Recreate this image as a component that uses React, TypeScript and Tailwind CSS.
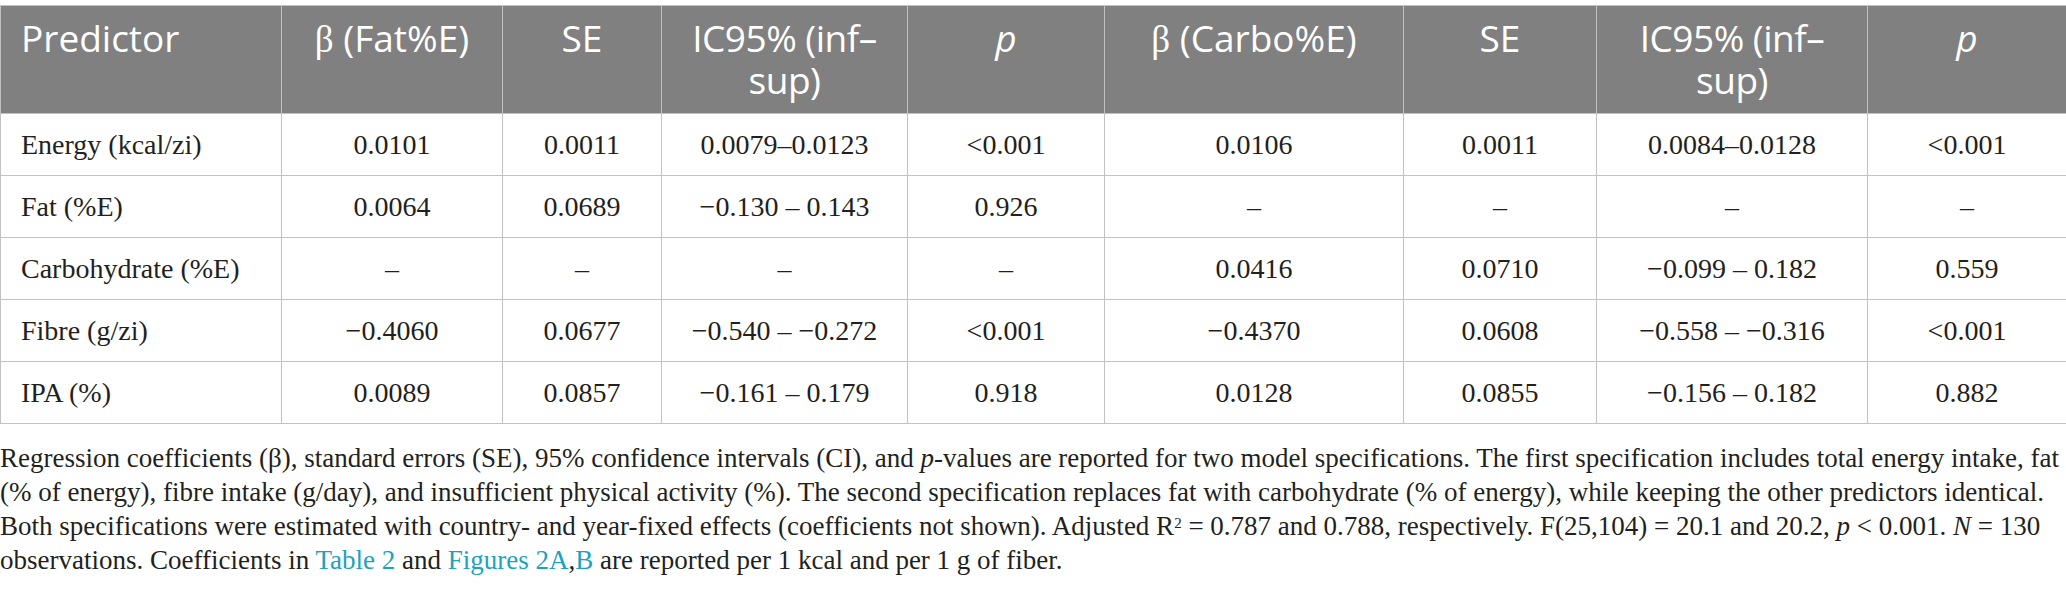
import React from 'react';

type Row = {
  label: string;
  cells: string[];
};

const COL_WIDTHS = ['w-[281px]', 'w-[221px]', 'w-[159px]', 'w-[246px]', 'w-[197px]', 'w-[299px]', 'w-[193px]', 'w-[271px]', 'w-[199px]'];

const ROWS: Row[] = [
  { label: 'Energy (kcal/zi)', cells: ['0.0101', '0.0011', '0.0079–0.0123', '<0.001', '0.0106', '0.0011', '0.0084–0.0128', '<0.001'] },
  { label: 'Fat (%E)', cells: ['0.0064', '0.0689', '−0.130 – 0.143', '0.926', '–', '–', '–', '–'] },
  { label: 'Carbohydrate (%E)', cells: ['–', '–', '–', '–', '0.0416', '0.0710', '−0.099 – 0.182', '0.559'] },
  { label: 'Fibre (g/zi)', cells: ['−0.4060', '0.0677', '−0.540 – −0.272', '<0.001', '−0.4370', '0.0608', '−0.558 – −0.316', '<0.001'] },
  { label: 'IPA (%)', cells: ['0.0089', '0.0857', '−0.161 – 0.179', '0.918', '0.0128', '0.0855', '−0.156 – 0.182', '0.882'] },
];

const headCell = 'border border-[#c2c2c2] px-5 pt-[11px] pb-[12px] align-top font-normal leading-[42px]';
const bodyCell = 'border border-[#c2c2c2] px-5 h-[62px] align-middle leading-[36px]';

const Link = ({ children }: { children: React.ReactNode }) => (
  <span className="text-[#1ba3bd]">{children}</span>
);

// serif beta, like the reference header
const Beta = () => <span className="font-['Liberation_Serif',serif]">β</span>;

export default function App() {
  return (
    <div className="w-[2066px] overflow-hidden bg-white pt-[5px] text-[#231f20]">
      <table className="w-[2066px] table-fixed border-collapse">
        <colgroup>
          {COL_WIDTHS.map((w, i) => (
            <col key={i} className={w} />
          ))}
        </colgroup>
        <thead>
          <tr className="bg-[#808080] text-white text-[37px] font-['Open_Sans',sans-serif]">
            <th className={`${headCell} text-left`}>Predictor</th>
            <th className={`${headCell} text-center`}>
              <Beta /> (Fat%E)
            </th>
            <th className={`${headCell} text-center`}>SE</th>
            <th className={`${headCell} text-center tracking-[-0.5px]`}>
              IC95% (inf–
              <br />
              sup)
            </th>
            <th className={`${headCell} text-center italic`}>p</th>
            <th className={`${headCell} text-center`}>
              <Beta /> (Carbo%E)
            </th>
            <th className={`${headCell} text-center`}>SE</th>
            <th className={`${headCell} text-center tracking-[-0.5px]`}>
              IC95% (inf–
              <br />
              sup)
            </th>
            <th className={`${headCell} text-center italic`}>p</th>
          </tr>
        </thead>
        <tbody className="text-[28px] font-['Liberation_Serif',serif]">
          {ROWS.map(row => (
            <tr key={row.label}>
              <td className={`${bodyCell} text-left`}>{row.label}</td>
              {row.cells.map((c, i) => (
                <td key={i} className={`${bodyCell} text-center`}>
                  {c}
                </td>
              ))}
            </tr>
          ))}
        </tbody>
      </table>

      {/* Table footnote */}
      <div className="mt-[17px] text-[27px] leading-[34px] font-['Liberation_Serif',serif] whitespace-nowrap">
        <div>
          Regression coefficients (β), standard errors (SE), 95% confidence intervals (CI), and <i>p</i>-values are reported for two model specifications. The first specification includes total energy intake, fat
        </div>
        <div>
          (% of energy), fibre intake (g/day), and insufficient physical activity (%). The second specification replaces fat with carbohydrate (% of energy), while keeping the other predictors identical.
        </div>
        <div>
          Both specifications were estimated with country- and year-fixed effects (coefficients not shown). Adjusted R<sup className="text-[15px]">2</sup> = 0.787 and 0.788, respectively. F(25,104) = 20.1 and 20.2, <i>p</i> &lt; 0.001. <i>N</i> = 130
        </div>
        <div>
          observations. Coefficients in <Link>Table 2</Link> and <Link>Figures 2A</Link>,<Link>B</Link> are reported per 1 kcal and per 1 g of fiber.
        </div>
      </div>
    </div>
  );
}
